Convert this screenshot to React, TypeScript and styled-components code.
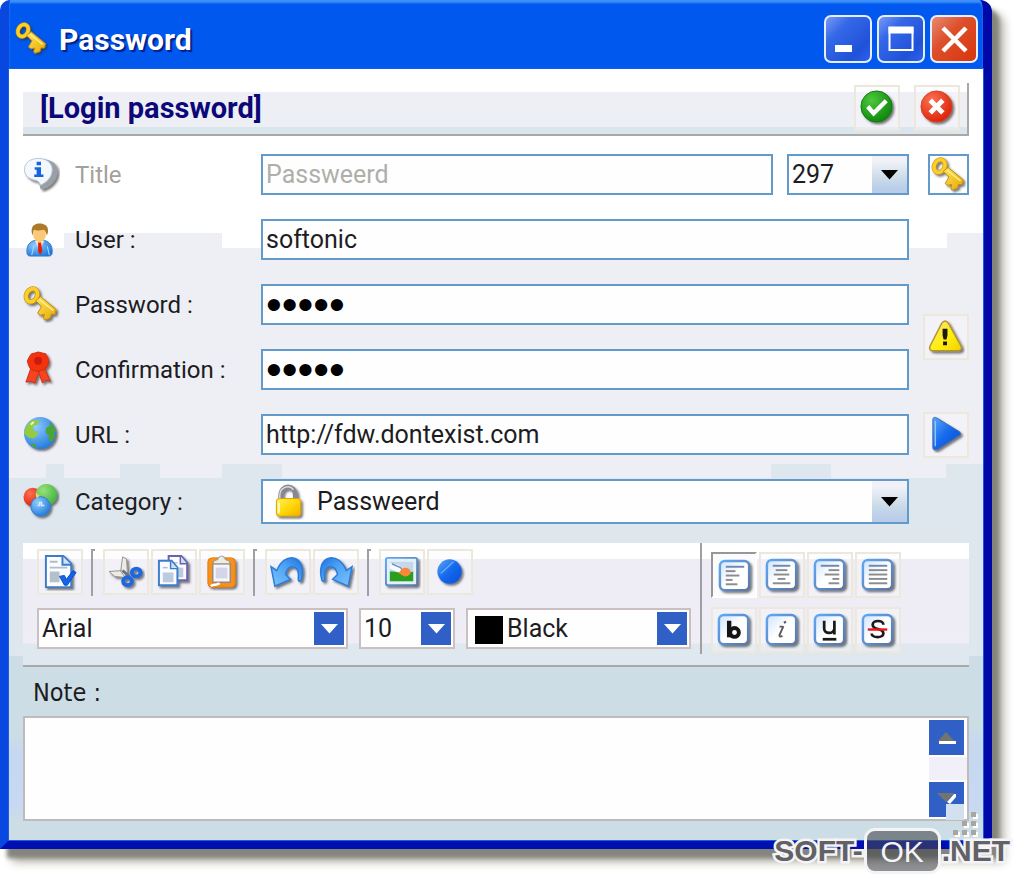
import React from "react";
import styled, { createGlobalStyle, css } from "styled-components";

const GlobalStyle = createGlobalStyle`
  *, *::before, *::after { box-sizing: border-box; }
  body { margin: 0; background: #fff; font-family: Roboto, "Liberation Sans", sans-serif; }
  button, input, select, textarea { font: inherit; color: inherit; margin: 0; border-radius: 0; }
`;

const uiFont = css`
  font-family: Roboto, "Liberation Sans", sans-serif;
  font-size: 25px;
  line-height: 30px;
  color: #1c1c22;
`;

const Desktop = styled.main`
  position: relative;
  padding: 0 28px 29px 0;
  overflow: hidden;
`;

const Window = styled.section`
  border: solid;
  border-width: 0 9px 9px 9px;
  border-color: #0058ee #0008a8 #0010b0 #0848e0;
  border-radius: 10px 12px 0 0;
  background: #0058ee;
  box-shadow: inset 0 3px 2px #3a90f8, 7px 9px 4px #85857d, 12px 13px 10px #b4b2a8;
`;

const TitleBar = styled.header`
  display: flex;
  align-items: center;
  gap: 10px;
  height: 69px;
  padding: 8px 5px 0 6px;
`;

const WindowTitle = styled.h1`
  flex: 1;
  margin: 0;
  padding-top: 2px;
  font: 700 30px/36px Roboto, sans-serif;
  color: #fff;
  text-shadow: 2px 2px 1px #06208a;
`;

const WindowControls = styled.div`
  display: flex;
  gap: 5px;
`;

const ControlButton = styled.button<{ $danger?: boolean }>`
  display: grid;
  place-items: center;
  width: 48px;
  height: 48px;
  padding: 0;
  border: 2px solid #e6eefc;
  border-radius: 7px;
  background: ${(p) =>
    p.$danger
      ? "linear-gradient(135deg, #e88a70, #dd4f2c 40%, #d8350c)"
      : "linear-gradient(135deg, #7a9af4, #3468e8 30%, #2052d8 75%, #2c62f0)"};
`;

const patch = (c: string) => `linear-gradient(${c}, ${c})`;
const LAV = "#eeeef5";
const ICE = "#dee6ee";

const Client = styled.div`
  position: relative;
  padding: 14px 14px 19px;
  outline: 1px solid #1a5be8;
  background:
    linear-gradient(#cddde5, #c5d8ef 20%, #c8d8f2 80%, #cddde5) 0 665px / 14px 90px no-repeat,
    linear-gradient(#cddde5, #c5d8ef 20%, #c8d8f2 80%, #cddde5) 100% 655px / 14px 100px no-repeat,
    ${patch(LAV)} 55px 164px / 158px 16px no-repeat,
    ${patch(LAV)} 100% 164px / 36px 16px no-repeat,
    ${patch(ICE)} 37px 395px / 18px 16px no-repeat,
    ${patch(ICE)} 111px 395px / 40px 16px no-repeat,
    ${patch(ICE)} 213px 395px / 60px 16px no-repeat,
    ${patch(ICE)} calc(100% - 152px) 395px / 60px 16px no-repeat,
    ${patch(ICE)} 100% 395px / 37px 16px no-repeat,
    linear-gradient(#fff 0 179px, ${LAV} 179px 409px, ${ICE} 409px 587px, #cddde5 587px);
`;

const Banner = styled.div`
  display: flex;
  align-items: center;
  gap: 14px;
  height: 53px;
  padding: 0 7px 2px 17px;
  border-right: 2px solid #a8a8a6;
  border-bottom: 2px solid #a8a8a6;
  background: linear-gradient(#fff 0 9px, ${LAV} 9px 44px, #dbe5ed 44px);
`;

const BannerTitle = styled.h2`
  flex: 1;
  margin: 0;
  font: 700 29px/32px Roboto, sans-serif;
  color: #0c0878;
`;

const FlatButton = styled.button<{ $pressed?: boolean }>`
  display: grid;
  place-items: center;
  width: 46px;
  height: 46px;
  padding: 0;
  border: 2px solid #ece8dc;
  background: rgba(250, 250, 255, 0.35);
  ${(p) =>
    p.$pressed &&
    css`
      border-color: #97979a #fff #fff #97979a;
      background: #fbfbfd;
      padding: 3px 0 0 3px;
    `}
`;

const Form = styled.form`
  display: grid;
  grid-template-columns: 52px 186px minmax(0, 1fr) 60px;
  grid-template-rows: repeat(5, 41px) 45px;
  row-gap: 24px;
  margin: 18px 0 19px;
  ${uiFont}
`;

const RowIcon = styled.span<{ $row: number }>`
  grid-area: ${(p) => p.$row} / 1;
  align-self: center;
  height: 38px;
`;

const Label = styled.label<{ $row: number; $muted?: boolean }>`
  grid-area: ${(p) => p.$row} / 2;
  align-self: center;
  font-size: 24px;
  color: ${(p) => (p.$muted ? "#a3a19c" : "inherit")};
`;

const FieldCell = styled.div<{ $row: number }>`
  grid-area: ${(p) => p.$row} / 3;
  display: flex;
  gap: 14px;
`;

const fieldBox = css`
  border: 2px solid #629bcb;
  background: #fefefe;
`;

const TextField = styled.input<{ $muted?: boolean }>`
  flex: 1;
  min-width: 0;
  padding: 0 3px;
  outline: none;
  ${fieldBox}
  && { color: ${(p) => (p.$muted ? "#b0aeaa" : "#1c1c22")}; }
  &[type="password"] {
    font-family: "Liberation Sans", sans-serif;
    font-size: 45px;
    color: #000;
  }
`;

const SelectBox = styled.div<{ $width?: string; $tool?: boolean }>`
  display: grid;
  grid-template-columns: auto minmax(0, 1fr);
  align-items: stretch;
  flex: ${(p) => (p.$width ? `0 0 ${p.$width}` : "1")};
  ${fieldBox}
  ${(p) => p.$tool && css`height: 41px; border-color: #c9c1c1;`}
`;

const Select = styled.select`
  grid-area: 1 / 2;
  width: 100%;
  padding: 0 36px 0 3px;
  border: 0;
  outline: none;
  appearance: none;
  background: transparent;
`;

const Leading = styled.span`
  grid-area: 1 / 1;
  align-self: center;
  display: flex;
  padding: 0 6px 0 8px;
`;

const Swatch = styled.span`
  grid-area: 1 / 1;
  align-self: center;
  width: 28px;
  height: 28px;
  margin: 3px 1px 0 7px;
  background: #000;
`;

const Arrow = styled.span<{ $tool?: boolean }>`
  grid-area: 1 / 2;
  justify-self: end;
  display: grid;
  place-items: center;
  width: 35px;
  pointer-events: none;
  color: #000;
  background: linear-gradient(#f2f1f8 0 12%, #e4eaf3 30%, #cbdbe8 60%, #b9cdeb 90%);
  ${(p) =>
    p.$tool &&
    css`
      width: 30px;
      margin: 2px 2px 2px 0;
      color: #fff;
      background: #3060c6;
    `}
`;

const SideCell = styled.div<{ $area: string }>`
  grid-area: ${(p) => p.$area};
  display: flex;
  justify-content: flex-end;
  align-items: center;
`;

const KeyButton = styled.button`
  display: grid;
  place-items: center;
  width: 41px;
  height: 41px;
  padding: 0;
  ${fieldBox}
`;

const Toolbars = styled.div`
  display: flex;
  height: 124px;
  border-bottom: 2px solid #a8a8a6;
  background: linear-gradient(#fff 0 16px, #eeedf5 16px 60px, #efeef7 100px, #dfe7ef 101px);
`;

const EditTools = styled.div`
  flex: 1;
  display: flex;
  flex-direction: column;
  gap: 12px;
  height: 111px;
  padding: 6px 9px 0 14px;
  border-right: 2px solid #a0a0a2;
`;

const FormatTools = styled.div`
  display: flex;
  flex-direction: column;
  gap: 9px;
  width: 267px;
  padding: 9px 0 0 9px;
`;

const ToolRow = styled.div`
  display: flex;
  gap: 2px;
`;

const Divider = styled.span`
  width: 4px;
  height: 47px;
  margin: 0 6px;
  border: solid #a0a0a2;
  border-width: 2px 0 0 2px;
`;

const FontRow = styled.div`
  display: flex;
  gap: 11px;
  ${uiFont}
`;

const NoteLabel = styled.label`
  display: block;
  height: 49px;
  padding: 11px 10px 0;
  font: 25px/30px "DejaVu Sans Condensed", "DejaVu Sans", sans-serif;
  color: #1c1c22;
`;

const NoteBox = styled.div`
  display: flex;
  height: 105px;
  border: 2px solid #bfbabb;
  background: #fefefe;
`;

const NoteText = styled.textarea`
  flex: 1;
  border: 0;
  outline: none;
  resize: none;
  background: transparent;
  font-size: 25px;
`;

const ScrollBar = styled.div`
  display: flex;
  flex-direction: column;
  justify-content: space-between;
  width: 38px;
  padding: 2px 3px 2px 0;
  background: linear-gradient(#fefefe 0 39px, #f1eff8 39px 62px, #fefefe 62px);
`;

const ScrollButton = styled.button`
  display: grid;
  place-items: center;
  width: 35px;
  height: 35px;
  padding: 0;
  border: 0;
  background: #3060c6;
`;

const Grip = styled.span`
  position: absolute;
  right: 1px;
  bottom: 1px;
  display: flex;
  pointer-events: none;
`;

const Watermark = styled.div`
  position: absolute;
  right: 10px;
  bottom: 4px;
  display: flex;
  align-items: center;
  gap: 1px;
  font: 700 30px/44px "Liberation Sans", sans-serif;
  color: #626266;
  -webkit-text-stroke: 5px #f4f4f6;
  paint-order: stroke fill;
  pointer-events: none;
`;

const WatermarkBadge = styled.span`
  width: 77px;
  height: 46px;
  border: 3px solid #f4f4f6;
  border-radius: 11px;
  font-weight: 400;
  line-height: 42px;
  text-align: center;
  color: #f4f4f6;
  background: rgba(70, 74, 78, 0.6);
  -webkit-text-stroke: 0;
`;

/* ---------- icons ---------- */

type IconProps = { size?: number; children: React.ReactNode };
const Icon = ({ size = 37, children }: IconProps) => (
  <svg width={size} height={size} viewBox="0 0 38 38" fill="none" aria-hidden="true">
    {children}
  </svg>
);

const Gradients = () => (
  <svg width="0" height="0" style={{ position: "absolute" }} aria-hidden="true">
    <defs>
      <filter id="soft" x="-20%" y="-20%" width="150%" height="150%">
        <feDropShadow dx="2" dy="2" stdDeviation="1" floodColor="#333" floodOpacity="0.65" />
      </filter>
      <linearGradient id="gold" x1="0" y1="0" x2="1" y2="1">
        <stop offset="0" stopColor="#ffe45e" />
        <stop offset="1" stopColor="#e8a800" />
      </linearGradient>
      <linearGradient id="lockGold" x1="0" y1="0" x2="1" y2="1">
        <stop offset="0" stopColor="#fff060" />
        <stop offset="0.5" stopColor="#ffd808" />
        <stop offset="1" stopColor="#f0b000" />
      </linearGradient>
      <radialGradient id="green" cx="0.35" cy="0.3" r="0.8">
        <stop offset="0" stopColor="#4cc83c" />
        <stop offset="1" stopColor="#0a8008" />
      </radialGradient>
      <radialGradient id="lime" cx="0.35" cy="0.3" r="0.8">
        <stop offset="0" stopColor="#98e078" />
        <stop offset="1" stopColor="#3cb040" />
      </radialGradient>
      <radialGradient id="red" cx="0.35" cy="0.3" r="0.8">
        <stop offset="0" stopColor="#ff7050" />
        <stop offset="1" stopColor="#d81c04" />
      </radialGradient>
      <radialGradient id="sky" cx="0.35" cy="0.3" r="0.8">
        <stop offset="0" stopColor="#90ccff" />
        <stop offset="1" stopColor="#1c74d8" />
      </radialGradient>
      <linearGradient id="blue" x1="0" y1="0" x2="1" y2="1">
        <stop offset="0" stopColor="#5aa8f8" />
        <stop offset="0.5" stopColor="#1468ec" />
        <stop offset="1" stopColor="#0850d8" />
      </linearGradient>
      <linearGradient id="yellow" x1="0" y1="0" x2="1" y2="1">
        <stop offset="0" stopColor="#f8dc98" />
        <stop offset="0.55" stopColor="#fff010" />
        <stop offset="1" stopColor="#f0d000" />
      </linearGradient>
      <linearGradient id="paper" x1="0" y1="0" x2="1" y2="1">
        <stop offset="0" stopColor="#cfe4fb" />
        <stop offset="0.5" stopColor="#fff" />
        <stop offset="1" stopColor="#fff" />
      </linearGradient>
      <linearGradient id="edge" x1="0" y1="0" x2="1" y2="1">
        <stop offset="0" stopColor="#5ea8f4" />
        <stop offset="1" stopColor="#5a76a4" />
      </linearGradient>
      <linearGradient id="arc" x1="0" y1="1" x2="1" y2="0">
        <stop offset="0" stopColor="#7cc4fc" />
        <stop offset="0.6" stopColor="#4ca0f4" />
        <stop offset="1" stopColor="#1c70dc" />
      </linearGradient>
    </defs>
  </svg>
);

const KeyIcon = ({ size }: { size?: number }) => (
  <Icon size={size}>
    <g filter="url(#soft)">
      <ellipse cx="9" cy="9.500" rx="5.500" ry="7" transform="rotate(28 9 9.500)" stroke="#c08c10" strokeWidth="5" />
      <ellipse cx="9" cy="9.500" rx="5.500" ry="7" transform="rotate(28 9 9.500)" stroke="#fbcf28" strokeWidth="3.800" />
      <path d="M13 15l5-4 16 13-1 5-4 0-1 4-6 2-1-2 1-4-4 1-3-2 4-7z" fill="url(#gold)" stroke="#c08c10" />
      <path d="M17 14l14 11" stroke="#fff08c" strokeWidth="1.500" />
    </g>
  </Icon>
);

const InfoIcon = () => (
  <Icon>
    <g filter="url(#soft)">
      <path d="M18 3C10 2 2 7.500 2 14s5 10.500 12 12c2 .5 3 2 3.500 6 .2 2 2 3 4 2 8-3 14-10 14-18C35.500 7 28 3 18 3z" fill="#9a9ea6" />
      <path d="M16 2.500C7 2.500 1.500 7.500 1.500 14c0 6 4.500 9.500 11.500 11 3 .8 4 2.500 5 5 6-3 12-8 12-16 0-7-6-11.500-14-11.500z" fill="#f4f8fd" stroke="#b0c4da" />
    </g>
    <path d="M14 6h4.500v3.500H14zM12 11.500h6.500V19H21v2.500h-9.500V19H14v-5h-2z" fill="#1464e0" />
  </Icon>
);

const UserIcon = () => (
  <Icon>
    <path d="M4 31c0-6 3-10 8-11h10c5 1 8 5 8 11 0 4-1 5-4 5H8c-3 0-4-1-4-5z" fill="url(#sky)" stroke="#2c7cd0" />
    <path d="M12 20l5 10 5-10z" fill="#fbe4b8" />
    <path d="M15.500 22h3l1.500 9-2.500 4-2-4z" fill="#e02010" />
    <ellipse cx="17" cy="14" rx="6.500" ry="7.500" fill="#fbc878" />
    <path d="M9 12C8 5 12 2.500 17 2.500S27 5 25.500 12l-1 3c-1-4-2-6-4-6-3 1-7 1-9 0-1 1-1 4-1.500 6z" fill="#ac7a28" />
    <path d="M11 26l-2 9M25 26l2 9" stroke="#b4dcff" />
  </Icon>
);

const RibbonIcon = () => (
  <Icon>
    <g filter="url(#soft)">
      <path d="M9 15L3 32l5-1 4 2 5-13zM21 15l7 16-5-1-3 3-5-14z" fill="#f44420" stroke="#d02c10" />
      <path d="M15.500 1l4 1 4 1 2 4 1 4-1 4-3 4-4 1-4 1-4-1-3-2-2-4-1-4 2-4 2-3 4-1z" fill="#f4300c" stroke="#d02c10" />
      <circle cx="15.500" cy="10" r="4" fill="#c81c08" />
    </g>
  </Icon>
);

const GlobeIcon = () => (
  <Icon>
    <g filter="url(#soft)">
      <circle cx="17.500" cy="17.500" r="16.500" fill="url(#sky)" />
      <path d="M3 12c2-5 5-8 9-8l5 1-2 4-5 1 1 5 4 2-1 4-4 2-4-1-5-4z" fill="#94cc3c" />
      <path d="M27 6c4 3 6 6 7 10l-2 1 1 5-4 5-3-3 1-4-4-3 1-5 4-2zM8 28l5 1 1 4c-3-1-5-2-6-5z" fill="#4ca434" />
      <path d="M8 9l3-3" stroke="#eaffc0" strokeWidth="2" />
    </g>
  </Icon>
);

const CategoryIcon = () => (
  <Icon>
    <g filter="url(#soft)">
      <circle cx="10" cy="14.500" r="9.500" fill="url(#red)" />
      <circle cx="24" cy="12" r="11" fill="url(#lime)" />
      <circle cx="18" cy="24" r="10" fill="url(#sky)" stroke="#2c7cd0" />
      <path d="M13 10l4 3-3 3z" fill="#ffd060" />
      <path d="M15 23h2v-3h2v3h3" stroke="#d4ecff" strokeWidth="1.500" />
    </g>
  </Icon>
);

const LockIcon = () => (
  <Icon>
    <g filter="url(#soft)">
      <path d="M10 19v-6c0-12 15-12 15 0v6" stroke="#85888e" strokeWidth="5" />
      <path d="M9 18v-5c0-9 10-12 14-6" stroke="#d4d8de" strokeWidth="1.500" />
      <rect x="5.500" y="16" width="25" height="18" rx="3" fill="url(#lockGold)" stroke="#d8a000" />
      <path d="M8 31V20" stroke="#fff8b0" strokeWidth="2.500" />
    </g>
  </Icon>
);

const CheckIcon = () => (
  <Icon>
    <g filter="url(#soft)">
      <circle cx="18" cy="18" r="16" fill="url(#green)" stroke="#0c7c0c" />
      <path d="M9 18l6 7L28 12" stroke="#fff" strokeWidth="4.500" />
    </g>
  </Icon>
);

const CancelIcon = () => (
  <Icon>
    <g filter="url(#soft)">
      <circle cx="18" cy="18" r="16" fill="url(#red)" stroke="#d04420" />
      <path d="M11.500 11.500l13 13M24.500 11.500l-13 13" stroke="#fff" strokeWidth="5" />
    </g>
  </Icon>
);

const WarnIcon = () => (
  <Icon>
    <g filter="url(#soft)">
      <path d="M17.500 2c1.500 0 2.500 1 3.500 2.500L34 28c1 2.500 0 4.500-3 4.500H5c-3 0-4-2-3-4.500L14 4.500C15 3 16 2 17.500 2z" fill="url(#yellow)" stroke="#b09430" strokeWidth="1.500" />
    </g>
    <path d="M15 10h5v7l-1 4h-3l-1-4zM15.500 23h4v4h-4z" fill="#1c1a10" />
  </Icon>
);

const PlayIcon = () => (
  <Icon>
    <g filter="url(#soft)">
      <path d="M5 4c0-3 2-3 4-2l23 14c2 1.500 2 3 0 4L10 34c-3 1.500-5 1-5-2z" fill="url(#blue)" stroke="#3c68b0" />
      <path d="M7.500 5v26" stroke="#8cc4fc" strokeWidth="1.500" />
    </g>
  </Icon>
);

const Sheet = ({ x = 0, y = 0, edge = "#3c7cc8" }: { x?: number; y?: number; edge?: string }) => (
  <g transform={`translate(${x} ${y})`}>
    <path d="M1 1h13l6 7v18H1z" fill="#fafcff" stroke={edge} strokeWidth="2" />
    <path d="M13 1v8h7" fill="#cfe2f8" stroke={edge} strokeWidth="1.500" />
    <path d="M5 8h5" stroke="#aec0d4" strokeWidth="1.500" />
    <path d="M5 13h11v10H5z" fill="#b9cbdf" />
  </g>
);

const DocumentCheckIcon = () => (
  <Icon>
    <g filter="url(#soft)">
      <path d="M4 2h18l8 8v24H4z" fill="#fafcff" stroke="#3c7cc8" strokeWidth="2" />
      <path d="M21 2v9h9" fill="#cfe2f8" stroke="#3c7cc8" strokeWidth="2" />
    </g>
    <path d="M8 8h8M8 14h18" stroke="#b4bcc8" strokeWidth="2" />
    <path d="M8 18h10v11H8z" fill="#b4c0ca" />
    <path d="M18 23l5-1 2 4 7-9 3 2-9 13h-3z" fill="#1464e8" stroke="#0c4cc0" />
  </Icon>
);

const CutIcon = () => (
  <Icon>
    <g filter="url(#soft)">
      <path d="M15 3l4 2 1 15-3 3-4-5zM1 18l14-1 4 4-3 3-9-1z" fill="#ecebe4" stroke="#96958e" />
      <path d="M15 17l7 6" stroke="#64748c" strokeWidth="3" />
      <ellipse cx="29" cy="19" rx="4.500" ry="4" stroke="#1c68dc" strokeWidth="4" />
      <ellipse cx="20" cy="28" rx="4.500" ry="4" stroke="#1c68dc" strokeWidth="4" />
    </g>
  </Icon>
);

const CopyIcon = () => (
  <Icon>
    <g filter="url(#soft)">
      <Sheet x={12} y={1} edge="#6a62ac" />
      <Sheet x={2} y={6} />
    </g>
  </Icon>
);

const PasteIcon = () => (
  <Icon>
    <g filter="url(#soft)">
      <rect x="4" y="4" width="28" height="30" rx="4" fill="#f8901c" stroke="#e07c10" />
      <path d="M9 10h18v19H9z" fill="#f4f6fc" stroke="#988878" strokeWidth="1.500" />
      <path d="M9 10c1-3 3-4 5-4 1-5 7-5 8 0 2 0 4 1 5 4z" fill="#ecece8" stroke="#98948c" />
    </g>
    <path d="M12 14h12v11H12z" fill="#d4d4ea" />
    <path d="M7 33c3-3 6 0 9-3" stroke="#fff" strokeWidth="2.500" />
  </Icon>
);

const arrowPath = "M1 13l6 4C11 7 18 3 24 4c9 2 11 12 8 23-1 2-3 1-3-1 1-8-1-13-6-13-3 0-6 3-7 8l5 5L5 33z";
const UndoIcon = () => (
  <Icon>
    <path filter="url(#soft)" d={arrowPath} fill="url(#arc)" stroke="#2c7cd8" strokeWidth="1.500" />
  </Icon>
);
const RedoIcon = () => (
  <Icon>
    <g filter="url(#soft)">
      <path transform="translate(36 0) scale(-1 1)" d={arrowPath} fill="url(#arc)" stroke="#2c7cd8" strokeWidth="1.500" />
    </g>
  </Icon>
);

const PictureIcon = () => (
  <Icon>
    <rect x="2" y="4" width="32" height="28" rx="2" fill="#e4effc" stroke="url(#edge)" strokeWidth="2" filter="url(#soft)" />
    <path d="M6 8h24v20H6z" fill="#c4d8ec" />
    <path d="M6 9l9 2 8 7-8 1-9-4z" fill="#f6fafe" />
    <path d="M8 10l9 4 3 4" stroke="#6c94c0" strokeWidth="1.500" />
    <path d="M6 18c8-1 10 4 24 0v10H6z" fill="#28a01c" />
    <ellipse cx="22" cy="18.500" rx="5.500" ry="4.500" fill="#fa8838" />
    <path d="M14 19c4-2 10-2 13 1-4 2-9 2-13-1z" fill="#fa8838" />
  </Icon>
);

const BallIcon = () => (
  <Icon>
    <circle cx="18" cy="18" r="12.500" fill="url(#blue)" filter="url(#soft)" />
    <path d="M9 20L22 8" stroke="#64acf8" strokeWidth="1.500" />
  </Icon>
);

const Tile = ({ children }: { children: React.ReactNode }) => (
  <Icon>
    <rect x="3" y="3" width="30" height="30" rx="5" fill="url(#paper)" stroke="url(#edge)" strokeWidth="2.500" filter="url(#soft)" />
    {children}
  </Icon>
);

const AlignIcon = ({ lines }: { lines: [number, number][] }) => (
  <Tile>
    {lines.map(([from, to], i) => (
      <path key={i} d={`M${from} ${9 + i * 4.5}H${to}`} stroke={i ? "#8c8c90" : "#6c88b4"} strokeWidth="2" />
    ))}
  </Tile>
);

const BoldIcon = () => (
  <Tile>
    <path d="M13.500 9v17" stroke="#141414" strokeWidth="4.500" />
    <ellipse cx="19" cy="21" rx="4.500" ry="4.500" stroke="#141414" strokeWidth="4" />
  </Tile>
);
const ItalicIcon = () => (
  <Tile>
    <path d="M20 14.500l-4 9c-.5 2 1 2 3 1M16 15h3" stroke="#5c5c62" strokeWidth="2" />
    <path d="M21 9.500l1 2" stroke="#5c5c62" strokeWidth="2.500" />
  </Tile>
);
const UnderlineIcon = () => (
  <Tile>
    <path d="M12.500 9v8c0 6 10 6 10.500 0V9v14" stroke="#1a1a1a" strokeWidth="2.800" />
    <path d="M11 28h14" stroke="#1a1a1a" strokeWidth="2.800" />
  </Tile>
);
const StrikeIcon = () => (
  <Tile>
    <path d="M24 13c0-5-11-5-11 0 0 6 11 3 11 9 0 5-12 5-12 0" stroke="#1a1a1a" strokeWidth="2.800" />
    <path d="M8 18h20" stroke="#f01818" strokeWidth="2.500" />
  </Tile>
);

const Triangle = () => (
  <svg width="17" height="10" viewBox="0 0 17 10" aria-hidden="true">
    <path d="M0 0h17L8.500 9.500z" fill="currentColor" />
  </svg>
);

const ArrowUp = () => (
  <svg width="20" height="14" viewBox="0 0 20 14" aria-hidden="true">
    <path d="M1 10L9 1l8 9z" fill="#74746c" />
    <path d="M2 10h17v3H2z" fill="#fff" />
  </svg>
);
const ArrowDown = () => (
  <svg width="20" height="14" viewBox="0 0 20 14" aria-hidden="true">
    <path d="M10 9l7-8h2v3l-6 7z" fill="#fff" />
    <path d="M0 0h17l-8 9z" fill="#74746c" />
  </svg>
);

const GripIcon = () => (
  <svg width="36" height="38" viewBox="0 0 36 38" aria-hidden="true">
    <path d="M0 3h18v16H0z" fill="#d2e0f0" />
    {[[25, 11], [16, 20], [25, 20], [7, 29], [16, 29], [25, 29]].map(([x, y]) => (
      <g key={`${x}-${y}`}>
        <path d={`M${x + 2} ${y + 2}h5v5h-5z`} fill="#fff" />
        <path d={`M${x} ${y}h5v5h-5z`} fill="#a8a6a0" />
      </g>
    ))}
  </svg>
);

const Tool = ({ label, pressed, children }: { label: string; pressed?: boolean; children: React.ReactNode }) => (
  <FlatButton type="button" aria-label={label} aria-pressed={pressed} $pressed={pressed}>
    {children}
  </FlatButton>
);

const ToolSelect = ({ label, value, width, leading }: { label: string; value: string; width?: string; leading?: React.ReactNode }) => (
  <SelectBox $tool $width={width}>
    {leading}
    <Select aria-label={label}>
      <option>{value}</option>
    </Select>
    <Arrow $tool><Triangle /></Arrow>
  </SelectBox>
);

export default function App() {
  return (
    <Desktop>
      <GlobalStyle />
      <Gradients />
      <Window>
        <TitleBar>
          <KeyIcon size={34} />
          <WindowTitle>Password</WindowTitle>
          <WindowControls>
            <ControlButton aria-label="Minimize">
              <svg width="44" height="44" viewBox="0 0 44 44"><path d="M9 28h17v7H9z" fill="#fff" /></svg>
            </ControlButton>
            <ControlButton aria-label="Maximize">
              <svg width="44" height="44" viewBox="0 0 44 44">
                <path d="M10.500 11h23v22h-23z" fill="none" stroke="#fff" strokeWidth="2" />
                <path d="M9.500 9.500h25v7h-25z" fill="#fff" />
              </svg>
            </ControlButton>
            <ControlButton aria-label="Close" $danger>
              <svg width="44" height="44" viewBox="0 0 44 44"><path d="M11 11l23 23M34 11L11 34" stroke="#fff" strokeWidth="4.500" /></svg>
            </ControlButton>
          </WindowControls>
        </TitleBar>

        <Client>
          <Banner>
            <BannerTitle>[Login password]</BannerTitle>
            <Tool label="Accept"><CheckIcon /></Tool>
            <Tool label="Cancel"><CancelIcon /></Tool>
          </Banner>

          <Form onSubmit={(e) => e.preventDefault()}>
            <RowIcon $row={1}><InfoIcon /></RowIcon>
            <Label $row={1} $muted htmlFor="title">Title</Label>
            <FieldCell $row={1}>
              <TextField id="title" $muted defaultValue="Passweerd" />
              <SelectBox $width="122px">
                <Select aria-label="Number"><option>297</option></Select>
                <Arrow><Triangle /></Arrow>
              </SelectBox>
            </FieldCell>
            <SideCell $area="1 / 4">
              <KeyButton type="button" aria-label="Choose icon"><KeyIcon size={36} /></KeyButton>
            </SideCell>

            <RowIcon $row={2}><UserIcon /></RowIcon>
            <Label $row={2} htmlFor="user">User :</Label>
            <FieldCell $row={2}><TextField id="user" defaultValue="softonic" /></FieldCell>

            <RowIcon $row={3}><KeyIcon /></RowIcon>
            <Label $row={3} htmlFor="password">Password :</Label>
            <FieldCell $row={3}><TextField id="password" type="password" defaultValue="abcde" /></FieldCell>
            <SideCell $area="3 / 4 / 5 / 5">
              <Tool label="Check password"><WarnIcon /></Tool>
            </SideCell>

            <RowIcon $row={4}><RibbonIcon /></RowIcon>
            <Label $row={4} htmlFor="confirm">Confirmation :</Label>
            <FieldCell $row={4}><TextField id="confirm" type="password" defaultValue="abcde" /></FieldCell>

            <RowIcon $row={5}><GlobeIcon /></RowIcon>
            <Label $row={5} htmlFor="url">URL :</Label>
            <FieldCell $row={5}><TextField id="url" defaultValue="http://fdw.dontexist.com" /></FieldCell>
            <SideCell $area="5 / 4">
              <Tool label="Open URL"><PlayIcon /></Tool>
            </SideCell>

            <RowIcon $row={6}><CategoryIcon /></RowIcon>
            <Label $row={6} htmlFor="category">Category :</Label>
            <FieldCell $row={6}>
              <SelectBox>
                <Leading><LockIcon /></Leading>
                <Select id="category"><option>Passweerd</option></Select>
                <Arrow><Triangle /></Arrow>
              </SelectBox>
            </FieldCell>
          </Form>

          <Toolbars>
            <EditTools>
              <ToolRow>
                <Tool label="Select all"><DocumentCheckIcon /></Tool>
                <Divider />
                <Tool label="Cut"><CutIcon /></Tool>
                <Tool label="Copy"><CopyIcon /></Tool>
                <Tool label="Paste"><PasteIcon /></Tool>
                <Divider />
                <Tool label="Undo"><UndoIcon /></Tool>
                <Tool label="Redo"><RedoIcon /></Tool>
                <Divider />
                <Tool label="Insert picture"><PictureIcon /></Tool>
                <Tool label="Insert bullet"><BallIcon /></Tool>
              </ToolRow>
              <FontRow>
                <ToolSelect label="Font" value="Arial" />
                <ToolSelect label="Size" value="10" width="96px" />
                <ToolSelect label="Colour" value="Black" width="225px" leading={<Swatch />} />
              </FontRow>
            </EditTools>
            <FormatTools>
              <ToolRow>
                <Tool label="Align left" pressed><AlignIcon lines={[[9, 28], [9, 19], [9, 23], [9, 16], [9, 21]]} /></Tool>
                <Tool label="Align centre"><AlignIcon lines={[[9, 27], [12, 24], [10, 26], [14, 22], [9, 27]]} /></Tool>
                <Tool label="Align right"><AlignIcon lines={[[9, 28], [17, 28], [13, 28], [21, 28], [17, 28]]} /></Tool>
                <Tool label="Justify"><AlignIcon lines={[[9, 28], [9, 28], [9, 28], [9, 28], [9, 28]]} /></Tool>
              </ToolRow>
              <ToolRow>
                <Tool label="Bold"><BoldIcon /></Tool>
                <Tool label="Italic"><ItalicIcon /></Tool>
                <Tool label="Underline"><UnderlineIcon /></Tool>
                <Tool label="Strikethrough"><StrikeIcon /></Tool>
              </ToolRow>
            </FormatTools>
          </Toolbars>

          <NoteLabel htmlFor="note">Note :</NoteLabel>
          <NoteBox>
            <NoteText id="note" />
            <ScrollBar>
              <ScrollButton type="button" aria-label="Scroll up"><ArrowUp /></ScrollButton>
              <ScrollButton type="button" aria-label="Scroll down"><ArrowDown /></ScrollButton>
            </ScrollBar>
          </NoteBox>
          <Grip><GripIcon /></Grip>
        </Client>
      </Window>
      <Watermark>
        <span>SOFT-</span>
        <WatermarkBadge>OK</WatermarkBadge>
        <span>.NET</span>
      </Watermark>
    </Desktop>
  );
}
